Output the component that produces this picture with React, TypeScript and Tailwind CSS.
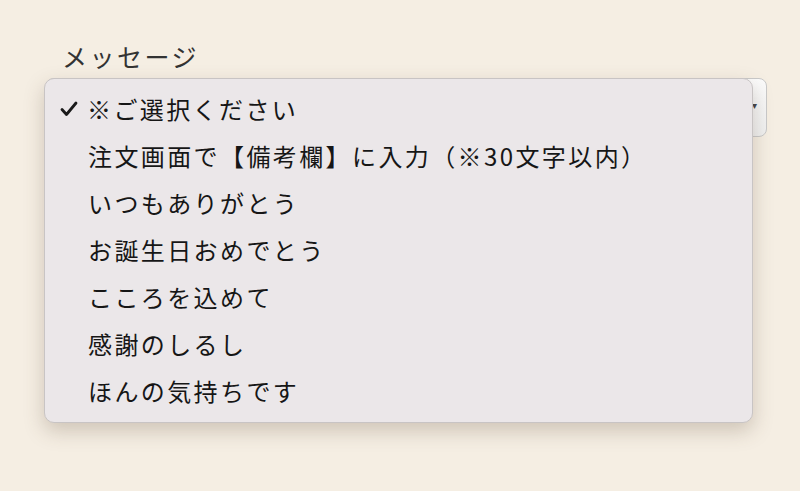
const options = [
  "注文画面で【備考欄】に入力（※30文字以内）",
  "いつもありがとう",
  "お誕生日おめでとう",
  "こころを込めて",
  "感謝のしるし",
  "ほんの気持ちです",
];

function CheckIcon() {
  return (
    <svg width="18" height="16" viewBox="0 0 18 16" className="shrink-0">
      <path
        d="M2 8.5 L6.5 13.5 L16 2"
        fill="none"
        stroke="#1a1a1a"
        strokeWidth="2.8"
        strokeLinecap="round"
        strokeLinejoin="round"
      />
    </svg>
  );
}

export default function App() {
  return (
    <div
      className="w-[800px] h-[491px] bg-[#f5eee3] pt-[39px] pl-[46px] text-[#161616]"
      style={{ fontFamily: '"Noto Sans CJK JP", "Noto Sans", sans-serif' }}
    >
      <p className="ml-[16px] text-[25px] leading-[35px] tracking-[2.5px] text-[#333]">
        メッセージ
      </p>

      <div className="relative mt-[4px] w-[721px] h-[59px] rounded-[8px] border border-[#c9c9c9] bg-gradient-to-b from-[#fbfbfb] to-[#efefef]">
        <span className="absolute right-[9px] top-[18px] text-[10px] text-[#444]">▾</span>

        <div className="absolute left-[-3px] top-[-1px] w-[709px] h-[345px] rounded-[10px] bg-[#ebe7e9] border border-[#c8c4c4] shadow-[0_8px_20px_rgba(90,70,50,0.25)] pt-[6px] pb-[10px]">
          <div className="h-[47px] flex items-center pl-[15px]">
            <CheckIcon />
            <span className="ml-[9px] text-[24px] tracking-[2.4px]">※ご選択ください</span>
          </div>
          {options.map((o) => (
            <div key={o} className="h-[47px] flex items-center pl-[43px]">
              <span className="text-[24px] tracking-[2.4px]">{o}</span>
            </div>
          ))}
        </div>
      </div>
    </div>
  );
}
